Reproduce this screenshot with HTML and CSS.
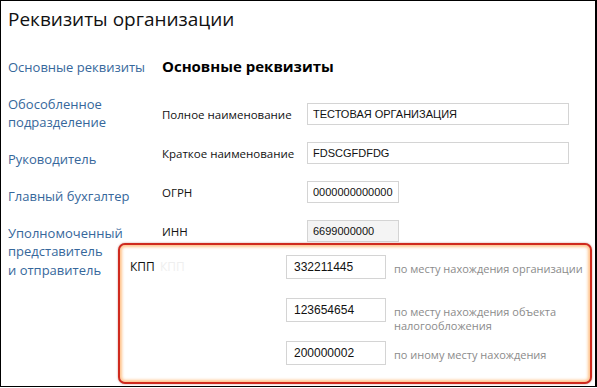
FILE: index.html
```html
<!DOCTYPE html>
<html>
<head>
  <meta charset="utf-8">
  <title>Реквизиты организации</title>
  <link rel="stylesheet" href="styles.css">
</head>
<body>
  <div class="page">
    <h1 class="pageTitle">Реквизиты организации</h1>
    <div class="layout">
      <div class="nav">
        <a class="navLink">Основные реквизиты</a>
        <a class="navLink">Обособленное<br>подразделение</a>
        <a class="navLink">Руководитель</a>
        <a class="navLink">Главный бухгалтер</a>
        <a class="navLink">Уполномоченный<br>представитель<br>и отправитель</a>
      </div>
      <div class="main">
        <h2 class="sectionTitle">Основные реквизиты</h2>
        <div class="formRow">
          <label>Полное наименование</label>
          <input class="field wide" type="text" value="ТЕСТОВАЯ ОРГАНИЗАЦИЯ">
        </div>
        <div class="formRow">
          <label>Краткое наименование</label>
          <input class="field wide" type="text" value="FDSCGFDFDG">
        </div>
        <div class="formRow">
          <label>ОГРН</label>
          <input class="field short" type="text" value="0000000000000">
        </div>
        <div class="formRow last">
          <label>ИНН</label>
          <input class="field short disabled" type="text" value="6699000000">
        </div>
        <div class="kppBox">
          <div class="kppLabel">КПП <span class="ghost">КПП</span></div>
          <div class="kppList">
            <div class="kppRow">
              <input class="field kpp" type="text" value="332211445">
              <span class="kppNote">по месту нахождения организации</span>
            </div>
            <div class="kppRow">
              <input class="field kpp" type="text" value="123654654">
              <span class="kppNote">по месту нахождения объекта<br>налогообложения</span>
            </div>
            <div class="kppRow">
              <input class="field kpp" type="text" value="200000002">
              <span class="kppNote">по иному месту нахождения</span>
            </div>
          </div>
        </div>
      </div>
    </div>
  </div>
</body>
</html>
```

FILE: styles.css
```css
body {
  margin: 0;
  background-color: #fff;
  font-family: "Open Sans", "Noto Sans", sans-serif;
}
.page {
  box-sizing: border-box;
  width: 597px;
  height: 387px;
  border: 1px solid #000;
  border-right-width: 2px;
  overflow: hidden;
}
.pageTitle {
  margin: 0;
  padding: 5px 0 0 7px;
  font-size: 19px;
  font-weight: normal;
  line-height: 26px;
  color: #111;
}
.layout {
  display: flex;
  margin-top: 26px;
}
.nav {
  width: 154px;
  padding-left: 7px;
  display: flex;
  flex-direction: column;
  gap: 18px;
}
.navLink {
  font-size: 13px;
  line-height: 18.7px;
  color: #36679b;
}
.main {
  flex-grow: 1;
}
.sectionTitle {
  margin: -2px 0 27px 0;
  font-size: 15px;
  line-height: 20px;
  font-weight: bold;
  color: #000;
}
.formRow {
  display: flex;
  align-items: center;
  height: 22px;
  margin-bottom: 17px;
}
.formRow.last {
  margin-bottom: 0;
}
.formRow label {
  width: 145px;
  font-size: 11.5px;
  color: #111;
}
.field {
  box-sizing: border-box;
  height: 22px;
  border: 1px solid #d4d4d4;
  padding: 0 5px;
  font-family: "Liberation Sans", Arial, sans-serif;
  font-size: 11px;
  color: #111;
  background-color: #fff;
  outline: none;
}
.wide {
  width: 262px;
}
.short {
  width: 92px;
}
.disabled {
  background-color: #f4f4f4;
}
.kppBox {
  position: relative;
  display: flex;
  box-sizing: border-box;
  width: 474px;
  height: 141px;
  margin: 1px 0 0 -44px;
  padding: 10px 0 0 10px;
  background-color: #fff;
  border: 2px solid #cf2a1e;
  border-radius: 7px;
  box-shadow: inset 0 0 3px 2px rgba(255, 170, 90, 0.7), 0 0 2px rgba(150, 30, 20, 0.5);
}
.kppLabel {
  width: 156px;
  font-size: 12px;
  line-height: 24px;
  color: #111;
}
.ghost {
  color: #efefef;
  margin-left: 2px;
}
.kppList {
  display: flex;
  flex-direction: column;
  gap: 20px;
}
.kppRow {
  display: flex;
  align-items: flex-start;
  height: 23px;
}
.kpp {
  width: 100px;
  height: 24px;
  padding: 0 7px;
  font-size: 12px;
}
.kppNote {
  margin-left: 8px;
  padding-top: 7px;
  font-size: 11px;
  line-height: 14px;
  color: #8b8b8b;
}
```
